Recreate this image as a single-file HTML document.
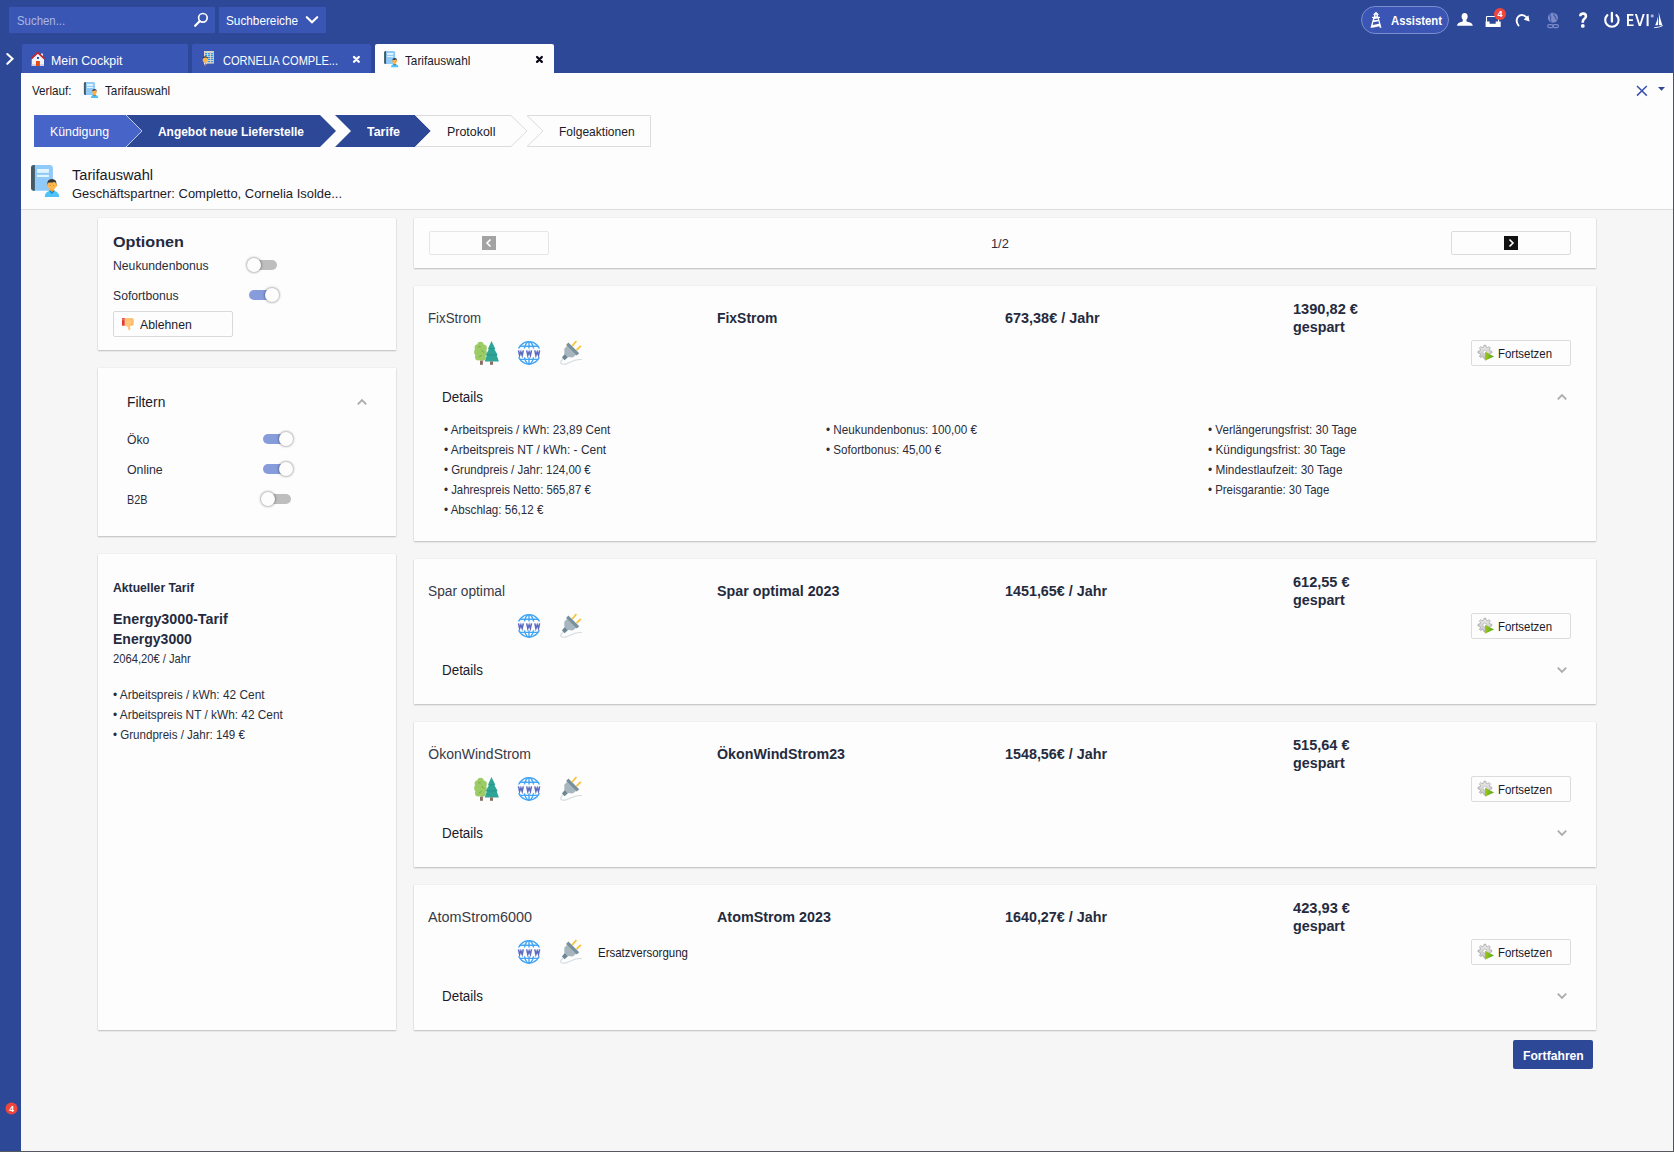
<!DOCTYPE html>
<html><head><meta charset="utf-8"><style>
html,body{margin:0;padding:0;width:1674px;height:1152px;overflow:hidden;}
body{position:relative;font-family:"Liberation Sans",sans-serif;}
.r{position:absolute;}
.t{position:absolute;line-height:1;white-space:nowrap;transform-origin:0 0;}
</style></head><body>
<div class="r" style="left:0px;top:0px;width:1674px;height:1152px;background:#2e4898"></div>
<div class="r" style="left:21px;top:73px;width:1652px;height:137px;background:#fdfdfd"></div>
<div class="r" style="left:21px;top:209px;width:1652px;height:1px;background:#dedede"></div>
<div class="r" style="left:21px;top:210px;width:1652px;height:941px;background:#f6f6f6"></div>
<div class="r" style="left:1673px;top:0px;width:1px;height:1152px;background:#4f5259"></div>
<div class="r" style="left:0px;top:1151px;width:1674px;height:1px;background:#55585e"></div>
<div class="r" style="left:9px;top:7px;width:206px;height:26px;background:#3956b4"></div>
<div class="t" style="left:16.70px;top:15px;font-size:12.6px;font-weight:400;color:#a9b6e3;transform:scaleX(0.9057);">Suchen...</div>
<svg class="r" style="left:188px;top:6px" width="28" height="28" viewBox="0 0 28 28"><circle cx="14.9" cy="11.8" r="4.3" fill="none" stroke="#fff" stroke-width="1.7"/><line x1="11.6" y1="15.3" x2="7.2" y2="19.8" stroke="#fff" stroke-width="2.3" stroke-linecap="round"/></svg>
<div class="r" style="left:219px;top:7px;width:107px;height:26px;background:#3956b4"></div>
<div class="t" style="left:226.00px;top:15px;font-size:12.6px;font-weight:400;color:#fff;transform:scaleX(0.9349);">Suchbereiche</div>
<svg class="r" style="left:296px;top:8px" width="30" height="24" viewBox="0 0 30 24"><polyline points="10.8,9.2 16,14.3 21.2,9.2" fill="none" stroke="#fff" stroke-width="2.2" stroke-linecap="round"/></svg>
<svg class="r" style="left:0px;top:48px" width="20" height="24" viewBox="0 0 20 24"><polyline points="7.3,6 12.5,10.8 7.3,15.8" fill="none" stroke="#fff" stroke-width="2.1" stroke-linecap="round"/></svg>
<div class="r" style="left:22px;top:44px;width:166px;height:29px;background:#3956b4;border-radius:2px 2px 0 0"></div>
<svg class="r" style="left:26px;top:48px" width="24" height="22" viewBox="0 0 24 22"><rect x="15" y="5.5" width="2" height="3" fill="#dfe6f5"/><polygon points="5.7,11 11.8,5.2 18,11 18,18 5.7,18" fill="#f1f1f8"/><rect x="5.7" y="16.2" width="12.3" height="1.7" fill="#c9cde8"/><polyline points="5.2,10.8 11.8,4.6 18.6,10.8" fill="none" stroke="#c62828" stroke-width="1.6"/><rect x="10" y="13" width="3.9" height="5" fill="#e64a19"/><rect x="11" y="9" width="1.9" height="1.9" fill="#0d47a1"/></svg>
<div class="t" style="left:51.20px;top:55px;font-size:12.6px;font-weight:400;color:#fff;transform:scaleX(0.9808);">Mein Cockpit</div>
<div class="r" style="left:192px;top:44px;width:179px;height:29px;background:#3956b4;border-radius:2px 2px 0 0"></div>
<svg class="r" style="left:198px;top:48px" width="24" height="24" viewBox="0 0 24 24"><rect x="6" y="3" width="9.9" height="12.6" fill="#d9d4c9"/><rect x="7" y="4.9" width="2.1" height="1.3" rx="0.6" fill="#2196f3"/><rect x="7" y="6.8" width="2.1" height="1.3" rx="0.6" fill="#2196f3"/><rect x="7" y="8.8" width="2.1" height="1.3" rx="0.6" fill="#2196f3"/><rect x="7" y="10.7" width="2.1" height="1.3" rx="0.6" fill="#2196f3"/><rect x="7" y="12.9" width="2.1" height="1.3" rx="0.6" fill="#2196f3"/><rect x="10" y="4.9" width="2.1" height="1.3" rx="0.6" fill="#2196f3"/><rect x="10" y="6.8" width="2.1" height="1.3" rx="0.6" fill="#2196f3"/><rect x="10" y="8.8" width="2.1" height="1.3" rx="0.6" fill="#2196f3"/><rect x="10" y="10.7" width="2.1" height="1.3" rx="0.6" fill="#2196f3"/><rect x="10" y="12.9" width="2.1" height="1.3" rx="0.6" fill="#2196f3"/><rect x="12.9" y="4.9" width="2.1" height="1.3" rx="0.6" fill="#2196f3"/><rect x="12.9" y="6.8" width="2.1" height="1.3" rx="0.6" fill="#2196f3"/><rect x="12.9" y="8.8" width="2.1" height="1.3" rx="0.6" fill="#2196f3"/><rect x="12.9" y="10.7" width="2.1" height="1.3" rx="0.6" fill="#2196f3"/><rect x="12.9" y="12.9" width="2.1" height="1.3" rx="0.6" fill="#2196f3"/><path d="M4.6 9.2 Q7.3 7.2 10 9.6 L10 10.6 L4.6 10.6Z" fill="#3b3b3b"/><circle cx="7.3" cy="12.1" r="2.6" fill="#fbb54b"/><path d="M5.6 15 L9 15 L7.3 18.5Z" fill="#e8eaf6"/><path d="M6.9 15.2 L7.7 15.2 L8 17.8 L7.3 18.6 L6.6 17.8Z" fill="#e53935"/></svg>
<div class="t" style="left:222.50px;top:55px;font-size:12.6px;font-weight:400;color:#fff;transform:scaleX(0.8787);">CORNELIA COMPLE...</div>
<svg class="r" style="left:349px;top:52px" width="14" height="14" viewBox="0 0 14 14"><path d="M5 5L9.8 9.8M9.8 5L5 9.8" stroke="#fff" stroke-width="2.3" stroke-linecap="round"/></svg>
<div class="r" style="left:375px;top:44px;width:179px;height:29px;background:#fdfdfd;border-radius:2px 2px 0 0"></div>
<svg class="r" style="left:378px;top:48px" width="24" height="24" viewBox="0 0 24 24"><g transform="translate(6.1,3) scale(0.506) translate(-5,-5)"><rect x="5" y="5" width="21.9" height="25.7" rx="3" fill="#90caf9"/><path d="M8.9 5 L8 5 Q5 5 5 8 L5 27.7 Q5 30.7 8 30.7 L8.9 30.7Z" fill="#455a64"/><rect x="11.1" y="9" width="11.8" height="3.8" fill="#e1f5fe"/><rect x="11.1" y="14.9" width="11.8" height="2.1" fill="#e1f5fe"/><path d="M18.75 37 Q18.9 31.3 24 31 L27.8 31 Q33 31.3 33.2 37Z" fill="#4fc3f7"/><path d="M22.6 30.6 L29.2 30.6 L25.9 34Z" fill="#0288d1"/><path d="M23.4 28.6 L28.4 28.6 L25.9 32.8Z" fill="#ff9800"/><ellipse cx="21.6" cy="25.2" rx="0.9" ry="1.3" fill="#f9a63a"/><ellipse cx="30.2" cy="25.2" rx="0.9" ry="1.3" fill="#f9a63a"/><ellipse cx="25.9" cy="24.9" rx="4.2" ry="5.1" fill="#ffb74d"/><path d="M21.4 24.8 Q20.8 19.1 25.9 19 Q31 19.1 30.4 24.8 Q29.8 22.2 28.2 21.7 Q26 23 22.6 22.4 Q21.8 23 21.4 24.8Z" fill="#34383c"/><circle cx="24.4" cy="25.6" r="0.45" fill="#8a5a20"/><circle cx="27.4" cy="25.6" r="0.45" fill="#8a5a20"/></g></svg>
<div class="t" style="left:405.30px;top:55px;font-size:12.6px;font-weight:400;color:#1a1a2a;transform:scaleX(0.9329);">Tarifauswahl</div>
<svg class="r" style="left:530px;top:50px" width="20" height="20" viewBox="0 0 20 20"><path d="M7.05 7.05L11.85 11.85M11.85 7.05L7.05 11.85" stroke="#0a0a1a" stroke-width="2.3" stroke-linecap="round"/></svg>
<div class="r" style="left:1361px;top:6px;width:88px;height:28px;background:#3a55b3;border:1px solid #7b8dcc;border-radius:14px;box-sizing:border-box"></div>
<svg class="r" style="left:1366px;top:8px" width="22" height="24" viewBox="0 0 22 24"><g fill="#fff"><polygon points="10,3.8 13.2,6.7 6.8,6.7"/><rect x="8" y="6.5" width="4" height="3"/><rect x="6" y="8.8" width="8" height="1.3" rx="0.5"/><polygon points="7.2,10 12.8,10 15.5,19.8 4.5,19.8"/></g><g fill="#3a55b3"><rect x="9.4" y="7.2" width="1.2" height="1.1"/><polygon points="8.3,10.9 11.8,10.5 12.1,11.7 8.1,12.3"/><polygon points="7.2,14.2 12.5,13.3 13,15.8 6.8,17"/><polygon points="6.2,19.9 13.3,18.2 13.8,19.9"/></g></svg>
<div class="t" style="left:1391.00px;top:15px;font-size:12.6px;font-weight:700;color:#fff;transform:scaleX(0.8977);">Assistent</div>
<svg class="r" style="left:1452px;top:4px" width="24" height="24" viewBox="0 0 24 24"><ellipse cx="12.6" cy="12.6" rx="3" ry="3.6" fill="#fff"/><path d="M11 15.5 L14.2 15.5 L14.6 17.6 Q20.5 18.6 20.8 21.8 L5 21.8 Q5.3 18.6 10.6 17.6Z" fill="#fff"/></svg>
<svg class="r" style="left:1484px;top:14px" width="18" height="15" viewBox="0 0 18 15"><path d="M2.5 2.5 L14.5 2.5 L14.5 8 M2.5 2.5 L2.5 8" fill="none" stroke="#fff" stroke-width="1.1"/><path d="M1.6 7.6 L5.6 7.6 L5.6 9.8 L11.7 9.8 L11.7 7.6 L16.7 7.6 L16.7 13.1 L1.6 13.1Z" fill="#fff"/></svg>
<svg class="r" style="left:1493px;top:7px" width="14" height="14" viewBox="0 0 14 14"><circle cx="7" cy="7" r="6" fill="#f0453a"/><text x="7" y="10.2" font-family="Liberation Sans" font-weight="700" font-size="9" fill="#fff" text-anchor="middle">4</text></svg>
<svg class="r" style="left:1512px;top:10px" width="20" height="18" viewBox="0 0 20 18"><path d="M6.5 15.5 Q3.4 11.5 5.5 7.6 Q7.8 4 11.6 5.3 Q13.6 6 15 8" fill="none" stroke="#fff" stroke-width="1.9" stroke-linecap="round"/><polygon points="17.6,11.4 16.4,5.2 11.6,9.6" fill="#fff"/></svg>
<svg class="r" style="left:1544px;top:10px" width="18" height="20" viewBox="0 0 18 20"><circle cx="8.9" cy="7.8" r="5" fill="#7b8bc9"/><path d="M6.5 3.6 Q5 6 6.8 7.2 Q5.6 9.6 7.4 12 M10.2 3.3 Q9.2 5.6 11.4 6.4 Q10.6 8.6 12.8 9.4" stroke="#4058a8" stroke-width="1.1" fill="none"/><rect x="3.7" y="14.6" width="5.4" height="3" rx="1.5" fill="none" stroke="#7b8bc9" stroke-width="1.2"/><rect x="9" y="14.6" width="5.4" height="3" rx="1.5" fill="none" stroke="#7b8bc9" stroke-width="1.2"/></svg>
<svg class="r" style="left:1577px;top:11px" width="12" height="18" viewBox="0 0 12 18"><path d="M3.3 5.3 Q3.3 2.6 6.2 2.6 Q8.9 2.6 8.9 5.2 Q8.9 6.9 7.3 7.9 Q5.8 8.9 5.8 10.6 L5.8 11.8" fill="none" stroke="#fff" stroke-width="2.6"/><circle cx="5.8" cy="14.9" r="1.9" fill="#fff"/></svg>
<svg class="r" style="left:1600px;top:6px" width="24" height="28" viewBox="0 0 24 28"><path d="M7.4 9.1 A6.7 6.7 0 1 0 16.4 9.1" fill="none" stroke="#fff" stroke-width="2.1" stroke-linecap="round"/><line x1="11.9" y1="7" x2="11.9" y2="15.6" stroke="#fff" stroke-width="2.3" stroke-linecap="round"/></svg>
<svg class="r" style="left:1624px;top:6px" width="50" height="28" viewBox="0 0 50 28"><g fill="#fff"><path d="M3 8 L9.4 8 L9.4 9.8 L4.9 9.8 L4.9 13.2 L8.9 13.2 L8.9 14.9 L4.9 14.9 L4.9 18.4 L9.6 18.4 L9.6 20.1 L3 20.1Z"/><path d="M10.9 8 L12.9 8 L15.8 17.6 L18.7 8 L20.7 8 L16.8 20.1 L14.8 20.1Z"/><rect x="22.6" y="8" width="2" height="12.1"/></g><circle cx="28.2" cy="9.9" r="1.6" fill="#a6b2e4"/><path d="M34.7 6.2 Q36.2 12.5 38.4 19.4 L34.8 19.1 Q35.3 12.8 34.7 6.2Z" fill="#fff"/><path d="M34 10.5 Q33 15.5 31.2 19.2 L33.9 19.2 Q34.4 15 34 10.5Z" fill="#fff"/><path d="M30.2 21.7 Q34.5 21.6 38.8 19.6" fill="none" stroke="#fff" stroke-width="0.9"/></svg>
<div class="t" style="left:32.00px;top:85px;font-size:12.6px;font-weight:400;color:#1a1a2a;transform:scaleX(0.9247);">Verlauf:</div>
<svg class="r" style="left:80px;top:78px" width="24" height="24" viewBox="0 0 24 24"><g transform="translate(3.9,3.9) scale(0.506) translate(-5,-5)"><rect x="5" y="5" width="21.9" height="25.7" rx="3" fill="#90caf9"/><path d="M8.9 5 L8 5 Q5 5 5 8 L5 27.7 Q5 30.7 8 30.7 L8.9 30.7Z" fill="#455a64"/><rect x="11.1" y="9" width="11.8" height="3.8" fill="#e1f5fe"/><rect x="11.1" y="14.9" width="11.8" height="2.1" fill="#e1f5fe"/><path d="M18.75 37 Q18.9 31.3 24 31 L27.8 31 Q33 31.3 33.2 37Z" fill="#4fc3f7"/><path d="M22.6 30.6 L29.2 30.6 L25.9 34Z" fill="#0288d1"/><path d="M23.4 28.6 L28.4 28.6 L25.9 32.8Z" fill="#ff9800"/><ellipse cx="21.6" cy="25.2" rx="0.9" ry="1.3" fill="#f9a63a"/><ellipse cx="30.2" cy="25.2" rx="0.9" ry="1.3" fill="#f9a63a"/><ellipse cx="25.9" cy="24.9" rx="4.2" ry="5.1" fill="#ffb74d"/><path d="M21.4 24.8 Q20.8 19.1 25.9 19 Q31 19.1 30.4 24.8 Q29.8 22.2 28.2 21.7 Q26 23 22.6 22.4 Q21.8 23 21.4 24.8Z" fill="#34383c"/><circle cx="24.4" cy="25.6" r="0.45" fill="#8a5a20"/><circle cx="27.4" cy="25.6" r="0.45" fill="#8a5a20"/></g></svg>
<div class="t" style="left:104.50px;top:85px;font-size:12.6px;font-weight:400;color:#1a1a2a;transform:scaleX(0.9314);">Tarifauswahl</div>
<svg class="r" style="left:1632px;top:82px" width="20" height="18" viewBox="0 0 20 18"><path d="M5 4 L14.8 13.6 M14.8 4 L5 13.6" stroke="#3a52b0" stroke-width="1.5"/></svg>
<svg class="r" style="left:1655px;top:84px" width="14" height="10" viewBox="0 0 14 10"><polygon points="3,2.9 10,2.9 6.5,6.8" fill="#2e4898"/></svg>
<svg class="r" style="left:0px;top:0px" width="700" height="160" viewBox="0 0 700 160"><polygon points="34,115 126,115 142,131 126,147 34,147" fill="#4764c8"/><polygon points="126,115 320,115 336,131 320,147 126,147 142,131" fill="#2e4898"/><polyline points="126,115 142,131 126,147" fill="none" stroke="#c9d0ea" stroke-width="0.9"/><polygon points="335,115 415,115 431,131 415,147 335,147 351,131" fill="#2e4898"/><polygon points="415.5,115.5 511,115.5 527,131 511,146.5 415.5,146.5 431,131" fill="#fdfdfd" stroke="#dcdcdc" stroke-width="1"/><polygon points="527,115.5 650.5,115.5 650.5,146.5 527,146.5 543,131" fill="#fdfdfd" stroke="#dcdcdc" stroke-width="1"/></svg>
<div class="t" style="left:50.00px;top:126px;font-size:12.6px;font-weight:400;color:#fff;transform:scaleX(0.9795);">Kündigung</div>
<div class="t" style="left:158.20px;top:126px;font-size:12.6px;font-weight:700;color:#fff;transform:scaleX(0.9482);">Angebot neue Lieferstelle</div>
<div class="t" style="left:367.20px;top:126px;font-size:12.6px;font-weight:700;color:#fff;transform:scaleX(0.9888);">Tarife</div>
<div class="t" style="left:447.40px;top:126px;font-size:12.6px;font-weight:400;color:#1a1a2a;transform:scaleX(0.9878);">Protokoll</div>
<div class="t" style="left:559.40px;top:126px;font-size:12.6px;font-weight:400;color:#1a1a2a;transform:scaleX(0.9555);">Folgeaktionen</div>
<svg class="r" style="left:26px;top:160px" width="38" height="40" viewBox="0 0 38 40"><rect x="5" y="5" width="21.9" height="25.7" rx="3" fill="#90caf9"/><path d="M8.9 5 L8 5 Q5 5 5 8 L5 27.7 Q5 30.7 8 30.7 L8.9 30.7Z" fill="#455a64"/><rect x="11.1" y="9" width="11.8" height="3.8" fill="#e1f5fe"/><rect x="11.1" y="14.9" width="11.8" height="2.1" fill="#e1f5fe"/><path d="M18.75 37 Q18.9 31.3 24 31 L27.8 31 Q33 31.3 33.2 37Z" fill="#4fc3f7"/><path d="M22.6 30.6 L29.2 30.6 L25.9 34Z" fill="#0288d1"/><path d="M23.4 28.6 L28.4 28.6 L25.9 32.8Z" fill="#ff9800"/><ellipse cx="21.6" cy="25.2" rx="0.9" ry="1.3" fill="#f9a63a"/><ellipse cx="30.2" cy="25.2" rx="0.9" ry="1.3" fill="#f9a63a"/><ellipse cx="25.9" cy="24.9" rx="4.2" ry="5.1" fill="#ffb74d"/><path d="M21.4 24.8 Q20.8 19.1 25.9 19 Q31 19.1 30.4 24.8 Q29.8 22.2 28.2 21.7 Q26 23 22.6 22.4 Q21.8 23 21.4 24.8Z" fill="#34383c"/><circle cx="24.4" cy="25.6" r="0.45" fill="#8a5a20"/><circle cx="27.4" cy="25.6" r="0.45" fill="#8a5a20"/></svg>
<div class="t" style="left:71.80px;top:167px;font-size:15.4px;font-weight:400;color:#1a1a2a;transform:scaleX(0.9468);">Tarifauswahl</div>
<div class="t" style="left:71.80px;top:188px;font-size:12.6px;font-weight:400;color:#1a1a2a;transform:scaleX(1.0286);">Geschäftspartner: Completto, Cornelia Isolde...</div>
<div class="r" style="left:98px;top:218px;width:298px;height:132px;background:#fdfdfd;box-shadow:0 1px 1.5px rgba(0,0,0,0.22),0 0 1px rgba(0,0,0,0.12)"></div>
<div class="r" style="left:98px;top:368px;width:298px;height:168px;background:#fdfdfd;box-shadow:0 1px 1.5px rgba(0,0,0,0.22),0 0 1px rgba(0,0,0,0.12)"></div>
<div class="r" style="left:98px;top:554px;width:298px;height:476px;background:#fdfdfd;box-shadow:0 1px 1.5px rgba(0,0,0,0.22),0 0 1px rgba(0,0,0,0.12)"></div>
<div class="r" style="left:414px;top:218px;width:1182px;height:50px;background:#fdfdfd;box-shadow:0 1px 1.5px rgba(0,0,0,0.22),0 0 1px rgba(0,0,0,0.12)"></div>
<div class="r" style="left:414px;top:286px;width:1182px;height:255px;background:#fdfdfd;box-shadow:0 1px 1.5px rgba(0,0,0,0.22),0 0 1px rgba(0,0,0,0.12)"></div>
<div class="r" style="left:414px;top:559px;width:1182px;height:145px;background:#fdfdfd;box-shadow:0 1px 1.5px rgba(0,0,0,0.22),0 0 1px rgba(0,0,0,0.12)"></div>
<div class="r" style="left:414px;top:722px;width:1182px;height:145px;background:#fdfdfd;box-shadow:0 1px 1.5px rgba(0,0,0,0.22),0 0 1px rgba(0,0,0,0.12)"></div>
<div class="r" style="left:414px;top:885px;width:1182px;height:145px;background:#fdfdfd;box-shadow:0 1px 1.5px rgba(0,0,0,0.22),0 0 1px rgba(0,0,0,0.12)"></div>
<div class="t" style="left:113.30px;top:234px;font-size:15.4px;font-weight:700;color:#252b3e;transform:scaleX(1.0511);">Optionen</div>
<div class="t" style="left:113.30px;top:260px;font-size:12.6px;font-weight:400;color:#2a2d3c;transform:scaleX(0.9693);">Neukundenbonus</div>
<div class="r" style="left:249px;top:260px;width:28px;height:10px;background:#bebebe;border-radius:5px"></div>
<div class="r" style="left:247px;top:258px;width:14px;height:14px;border-radius:50%;background:#fdfdfd;box-shadow:0 0 2px 1px rgba(0,0,0,0.28)"></div>
<div class="t" style="left:113.30px;top:290px;font-size:12.6px;font-weight:400;color:#2a2d3c;transform:scaleX(0.9673);">Sofortbonus</div>
<div class="r" style="left:249px;top:290px;width:28px;height:10px;background:#879cdb;border-radius:5px"></div>
<div class="r" style="left:265px;top:288px;width:14px;height:14px;border-radius:50%;background:#fdfdfd;box-shadow:0 0 2px 1px rgba(0,0,0,0.28)"></div>
<div class="r" style="left:113px;top:311px;width:120px;height:26px;background:#fdfdfd;border:1px solid #d9d9d9;border-radius:2px;box-sizing:border-box"></div>
<svg class="r" style="left:110px;top:308px" width="30" height="28" viewBox="0 0 30 28"><rect x="12" y="10" width="2.8" height="7.7" fill="#e53935"/><rect x="12.6" y="10.6" width="0.8" height="1.6" fill="#ffcdd2"/><path d="M14.8 10 L22 10 Q23.7 10 23.7 11.6 L23.7 16.3 Q23.7 17.6 22.3 17.8 L20 18 L20.4 20.8 Q20.5 22.2 19.3 22.2 Q18.6 22.2 18.3 21.2 L17.4 18.4 L14.8 17.7Z" fill="#ffc578"/><path d="M21 12 L23.7 12 M21 14 L23.7 14 M21 16 L23.7 16" stroke="#f0a850" stroke-width="0.5"/></svg>
<div class="t" style="left:140.00px;top:319px;font-size:12.6px;font-weight:400;color:#1a1a2a;transform:scaleX(0.9731);">Ablehnen</div>
<div class="t" style="left:127.30px;top:395px;font-size:14.0px;font-weight:400;color:#1a1a2a;transform:scaleX(0.9844);">Filtern</div>
<svg class="r" style="left:356px;top:398px" width="12" height="8" viewBox="0 0 12 8"><polyline points="1.8,6.3 6,2.1 10.2,6.3" fill="none" stroke="#acacac" stroke-width="1.8"/></svg>
<div class="t" style="left:127.30px;top:434px;font-size:12.6px;font-weight:400;color:#2a2d3c;transform:scaleX(0.9693);">Öko</div>
<div class="r" style="left:263px;top:433.8px;width:28px;height:10.0px;background:#879cdb;border-radius:5px"></div>
<div class="r" style="left:279px;top:431.8px;width:14px;height:14px;border-radius:50%;background:#fdfdfd;box-shadow:0 0 2px 1px rgba(0,0,0,0.28)"></div>
<div class="t" style="left:127.30px;top:464px;font-size:12.6px;font-weight:400;color:#2a2d3c;transform:scaleX(0.9806);">Online</div>
<div class="r" style="left:263px;top:463.8px;width:28px;height:10.0px;background:#879cdb;border-radius:5px"></div>
<div class="r" style="left:279px;top:461.8px;width:14px;height:14px;border-radius:50%;background:#fdfdfd;box-shadow:0 0 2px 1px rgba(0,0,0,0.28)"></div>
<div class="t" style="left:127.30px;top:494px;font-size:12.6px;font-weight:400;color:#2a2d3c;transform:scaleX(0.8609);">B2B</div>
<div class="r" style="left:263px;top:493.8px;width:28px;height:10.0px;background:#bebebe;border-radius:5px"></div>
<div class="r" style="left:261px;top:491.8px;width:14px;height:14px;border-radius:50%;background:#fdfdfd;box-shadow:0 0 2px 1px rgba(0,0,0,0.28)"></div>
<div class="t" style="left:113.00px;top:582px;font-size:12.6px;font-weight:700;color:#252b3e;transform:scaleX(0.9672);">Aktueller Tarif</div>
<div class="t" style="left:113.00px;top:612px;font-size:14.0px;font-weight:700;color:#252b3e;transform:scaleX(1.0188);">Energy3000-Tarif</div>
<div class="t" style="left:113.00px;top:632px;font-size:14.0px;font-weight:700;color:#252b3e;transform:scaleX(1.0024);">Energy3000</div>
<div class="t" style="left:113.00px;top:653px;font-size:12.6px;font-weight:400;color:#2a2d3c;transform:scaleX(0.8888);">2064,20€ / Jahr</div>
<div class="t" style="left:113.00px;top:689px;font-size:12.6px;font-weight:400;color:#2a2d3c;transform:scaleX(0.9445);">• Arbeitspreis / kWh: 42 Cent</div>
<div class="t" style="left:113.00px;top:709px;font-size:12.6px;font-weight:400;color:#2a2d3c;transform:scaleX(0.9404);">• Arbeitspreis NT / kWh: 42 Cent</div>
<div class="t" style="left:113.00px;top:729px;font-size:12.6px;font-weight:400;color:#2a2d3c;transform:scaleX(0.9178);">• Grundpreis / Jahr: 149 €</div>
<div class="r" style="left:429px;top:231px;width:120px;height:24px;border:1px solid #e6e6e6;border-radius:2px;box-sizing:border-box;background:#fdfdfd"></div>
<svg class="r" style="left:482px;top:236px" width="14" height="14" viewBox="0 0 14 14"><rect width="14" height="14" fill="#a3a3a3"/><polyline points="8.5,3.5 5,7 8.5,10.5" fill="none" stroke="#fff" stroke-width="1.6"/></svg>
<div class="t" style="left:991.00px;top:238px;font-size:12.6px;font-weight:400;color:#2a2d3c;transform:scaleX(1.0162);">1/2</div>
<div class="r" style="left:1451px;top:231px;width:120px;height:24px;border:1px solid #dcdcdc;border-radius:2px;box-sizing:border-box;background:#fdfdfd"></div>
<svg class="r" style="left:1504px;top:236px" width="14" height="14" viewBox="0 0 14 14"><rect width="14" height="14" fill="#111"/><polyline points="5.5,3.5 9,7 5.5,10.5" fill="none" stroke="#fff" stroke-width="1.6"/></svg>
<div class="t" style="left:428.30px;top:311px;font-size:14.0px;font-weight:400;color:#383a46;transform:scaleX(0.9482);">FixStrom</div>
<div class="t" style="left:717.00px;top:311px;font-size:14.0px;font-weight:700;color:#252b3e;transform:scaleX(0.9936);">FixStrom</div>
<div class="t" style="left:1005.30px;top:311px;font-size:14.0px;font-weight:700;color:#252b3e;transform:scaleX(1.0309);">673,38€ / Jahr</div>
<div class="t" style="left:1293.40px;top:302px;font-size:14.0px;font-weight:700;color:#252b3e;transform:scaleX(1.0434);">1390,82 €</div>
<div class="t" style="left:1293.40px;top:320px;font-size:14.0px;font-weight:700;color:#252b3e;transform:scaleX(1.0222);">gespart</div>
<div class="r" style="left:1471px;top:340px;width:100px;height:26px;background:#fdfdfd;border:1px solid #dcdcdc;border-radius:2px;box-sizing:border-box"></div>
<svg class="r" style="left:1474px;top:340px" width="24" height="24" viewBox="0 0 24 24"><defs><linearGradient id="gg0" x1="0" y1="0" x2="0" y2="1"><stop offset="0" stop-color="#ececec"/><stop offset="1" stop-color="#c4c4c4"/></linearGradient><linearGradient id="pg0" x1="0" y1="0" x2="1" y2="0"><stop offset="0" stop-color="#a3c616"/><stop offset="1" stop-color="#4aaa1e"/></linearGradient></defs><path d="M15.97 10.97 L17.74 11.21 L17.74 12.99 L15.97 13.23 L15.29 14.89 L16.37 16.31 L15.11 17.57 L13.69 16.49 L12.03 17.17 L11.79 18.94 L10.01 18.94 L9.77 17.17 L8.11 16.49 L6.69 17.57 L5.43 16.31 L6.51 14.89 L5.83 13.23 L4.06 12.99 L4.06 11.21 L5.83 10.97 L6.51 9.31 L5.43 7.89 L6.69 6.63 L8.11 7.71 L9.77 7.03 L10.01 5.26 L11.79 5.26 L12.03 7.03 L13.69 7.71 L15.11 6.63 L16.37 7.89 L15.29 9.31Z" fill="url(#gg0)" stroke="#9a9a9a" stroke-width="0.7"/><circle cx="10.9" cy="12.1" r="2" fill="#fdfdfd" stroke="#a0a0a0" stroke-width="0.5"/><polygon points="11,11.7 20,16.5 11,20.8" fill="url(#pg0)"/></svg>
<div class="t" style="left:1498.00px;top:348px;font-size:12.6px;font-weight:400;color:#1a1a2a;transform:scaleX(0.9076);">Fortsetzen</div>
<svg class="r" style="left:470px;top:338px" width="32" height="30" viewBox="0 0 32 30"><circle cx="10.5" cy="7" r="3.2" fill="#9ccc65"/><circle cx="8" cy="9.6" r="3.4" fill="#9ccc65"/><circle cx="13.4" cy="10" r="3.5" fill="#9ccc65"/><circle cx="7.6" cy="14" r="3.5" fill="#9ccc65"/><circle cx="13.5" cy="15" r="3.4" fill="#9ccc65"/><circle cx="8.5" cy="19" r="3.5" fill="#9ccc65"/><circle cx="12.5" cy="19.4" r="3.3" fill="#9ccc65"/><circle cx="10.5" cy="13" r="5" fill="#9ccc65"/><path d="M8.3 9.2 Q9.5 8.2 10.6 8.7 M11.6 12.6 Q13.2 13 13.9 14.6 M9.2 19.2 Q10 17.6 11.6 17.6" stroke="#6f9e3e" stroke-width="0.9" fill="none"/><rect x="10" y="22.6" width="2.9" height="4.2" fill="#8d6e63"/><polygon points="21.5,2.9 25.3,10.7 24.2,10.7 27.6,16.9 26.6,16.9 28.9,23.4 14.8,23.4 16.9,16.9 15.9,16.9 19.1,10.7 18,10.7" fill="#2ea597"/><path d="M18.4 10.8 L24.9 10.8 M16.3 17 L27.2 17" stroke="#23938a" stroke-width="0.8"/><rect x="20" y="23.4" width="3" height="3.4" fill="#8d6e63"/></svg>
<svg class="r" style="left:514px;top:338px" width="32" height="30" viewBox="0 0 32 30"><defs><clipPath id="gc0"><rect x="0" y="0" width="32" height="10.5"/><rect x="0" y="19.3" width="32" height="12"/></clipPath></defs><g clip-path="url(#gc0)" fill="none" stroke="#42a5f5" stroke-width="1.4"><circle cx="15" cy="14.85" r="11.2"/><ellipse cx="15" cy="14.85" rx="5" ry="11.2"/><line x1="15" y1="3" x2="15" y2="27"/><line x1="5.9" y1="8.3" x2="24.1" y2="8.3"/><line x1="5.9" y1="21.4" x2="24.1" y2="21.4"/></g><g fill="none" stroke="#5c6bc0" stroke-width="1.55" stroke-linejoin="miter"><polyline points="4.5,12.4 5.6,17.4 6.9,13.8 8.2,17.4 9.3,12.4"/><polyline points="12.7,12.4 13.799999999999999,17.4 15.1,13.8 16.4,17.4 17.5,12.4"/><polyline points="20.8,12.4 21.9,17.4 23.2,13.8 24.5,17.4 25.6,12.4"/></g></svg>
<svg class="r" style="left:556px;top:336px" width="32" height="32" viewBox="0 0 32 32"><path d="M16.2 10 L20.4 5 M20.6 14.2 L24.8 9.8" stroke="#fbc02d" stroke-width="1.7"/><polygon points="11.2,9.7 8.3,12.8 8.3,17.8 11.7,21.1 16.7,21.4 20.5,18.4" fill="#a7b6be"/><polygon points="10.1,8.9 12.4,6.6 23.2,17.2 20.8,19.6" fill="#78909c"/><polygon points="5.9,21.4 8.8,18 11.9,21.3 8.5,24.2" fill="#6e8593"/><path d="M6.8 23.2 Q4 25.6 5 27.4 Q6.5 29 11 27.6 Q15.5 25.8 19 24.3 Q22 23.4 25.8 23.6" stroke="#d3dbdf" stroke-width="1.1" fill="none"/></svg>
<div class="t" style="left:442.00px;top:390px;font-size:14.0px;font-weight:400;color:#1a1a2a;transform:scaleX(0.9580);">Details</div>
<svg class="r" style="left:1556px;top:393px" width="12" height="8" viewBox="0 0 12 8"><polyline points="1.8,6.3 6,2.1 10.2,6.3" fill="none" stroke="#acacac" stroke-width="1.8"/></svg>
<div class="t" style="left:443.50px;top:424px;font-size:12.6px;font-weight:400;color:#2a2d3c;transform:scaleX(0.9342);">• Arbeitspreis / kWh: 23,89 Cent</div>
<div class="t" style="left:443.50px;top:444px;font-size:12.6px;font-weight:400;color:#2a2d3c;transform:scaleX(0.9499);">• Arbeitspreis NT / kWh: - Cent</div>
<div class="t" style="left:443.50px;top:464px;font-size:12.6px;font-weight:400;color:#2a2d3c;transform:scaleX(0.9099);">• Grundpreis / Jahr: 124,00 €</div>
<div class="t" style="left:443.50px;top:484px;font-size:12.6px;font-weight:400;color:#2a2d3c;transform:scaleX(0.9021);">• Jahrespreis Netto: 565,87 €</div>
<div class="t" style="left:443.50px;top:504px;font-size:12.6px;font-weight:400;color:#2a2d3c;transform:scaleX(0.9200);">• Abschlag: 56,12 €</div>
<div class="t" style="left:825.50px;top:424px;font-size:12.6px;font-weight:400;color:#2a2d3c;transform:scaleX(0.9282);">• Neukundenbonus: 100,00 €</div>
<div class="t" style="left:825.50px;top:444px;font-size:12.6px;font-weight:400;color:#2a2d3c;transform:scaleX(0.9228);">• Sofortbonus: 45,00 €</div>
<div class="t" style="left:1207.60px;top:424px;font-size:12.6px;font-weight:400;color:#2a2d3c;transform:scaleX(0.9236);">• Verlängerungsfrist: 30 Tage</div>
<div class="t" style="left:1207.60px;top:444px;font-size:12.6px;font-weight:400;color:#2a2d3c;transform:scaleX(0.9411);">• Kündigungsfrist: 30 Tage</div>
<div class="t" style="left:1207.60px;top:464px;font-size:12.6px;font-weight:400;color:#2a2d3c;transform:scaleX(0.9373);">• Mindestlaufzeit: 30 Tage</div>
<div class="t" style="left:1207.60px;top:484px;font-size:12.6px;font-weight:400;color:#2a2d3c;transform:scaleX(0.9072);">• Preisgarantie: 30 Tage</div>
<div class="t" style="left:428.30px;top:584px;font-size:14.0px;font-weight:400;color:#383a46;transform:scaleX(0.9797);">Spar optimal</div>
<div class="t" style="left:717.00px;top:584px;font-size:14.0px;font-weight:700;color:#252b3e;transform:scaleX(1.0223);">Spar optimal 2023</div>
<div class="t" style="left:1005.30px;top:584px;font-size:14.0px;font-weight:700;color:#252b3e;transform:scaleX(1.0237);">1451,65€ / Jahr</div>
<div class="t" style="left:1293.40px;top:575px;font-size:14.0px;font-weight:700;color:#252b3e;transform:scaleX(1.0367);">612,55 €</div>
<div class="t" style="left:1293.40px;top:593px;font-size:14.0px;font-weight:700;color:#252b3e;transform:scaleX(1.0222);">gespart</div>
<div class="r" style="left:1471px;top:613px;width:100px;height:26px;background:#fdfdfd;border:1px solid #dcdcdc;border-radius:2px;box-sizing:border-box"></div>
<svg class="r" style="left:1474px;top:613px" width="24" height="24" viewBox="0 0 24 24"><defs><linearGradient id="gg1" x1="0" y1="0" x2="0" y2="1"><stop offset="0" stop-color="#ececec"/><stop offset="1" stop-color="#c4c4c4"/></linearGradient><linearGradient id="pg1" x1="0" y1="0" x2="1" y2="0"><stop offset="0" stop-color="#a3c616"/><stop offset="1" stop-color="#4aaa1e"/></linearGradient></defs><path d="M15.97 10.97 L17.74 11.21 L17.74 12.99 L15.97 13.23 L15.29 14.89 L16.37 16.31 L15.11 17.57 L13.69 16.49 L12.03 17.17 L11.79 18.94 L10.01 18.94 L9.77 17.17 L8.11 16.49 L6.69 17.57 L5.43 16.31 L6.51 14.89 L5.83 13.23 L4.06 12.99 L4.06 11.21 L5.83 10.97 L6.51 9.31 L5.43 7.89 L6.69 6.63 L8.11 7.71 L9.77 7.03 L10.01 5.26 L11.79 5.26 L12.03 7.03 L13.69 7.71 L15.11 6.63 L16.37 7.89 L15.29 9.31Z" fill="url(#gg1)" stroke="#9a9a9a" stroke-width="0.7"/><circle cx="10.9" cy="12.1" r="2" fill="#fdfdfd" stroke="#a0a0a0" stroke-width="0.5"/><polygon points="11,11.7 20,16.5 11,20.8" fill="url(#pg1)"/></svg>
<div class="t" style="left:1498.00px;top:621px;font-size:12.6px;font-weight:400;color:#1a1a2a;transform:scaleX(0.9076);">Fortsetzen</div>
<svg class="r" style="left:514px;top:611px" width="32" height="30" viewBox="0 0 32 30"><defs><clipPath id="gc1"><rect x="0" y="0" width="32" height="10.5"/><rect x="0" y="19.3" width="32" height="12"/></clipPath></defs><g clip-path="url(#gc1)" fill="none" stroke="#42a5f5" stroke-width="1.4"><circle cx="15" cy="14.85" r="11.2"/><ellipse cx="15" cy="14.85" rx="5" ry="11.2"/><line x1="15" y1="3" x2="15" y2="27"/><line x1="5.9" y1="8.3" x2="24.1" y2="8.3"/><line x1="5.9" y1="21.4" x2="24.1" y2="21.4"/></g><g fill="none" stroke="#5c6bc0" stroke-width="1.55" stroke-linejoin="miter"><polyline points="4.5,12.4 5.6,17.4 6.9,13.8 8.2,17.4 9.3,12.4"/><polyline points="12.7,12.4 13.799999999999999,17.4 15.1,13.8 16.4,17.4 17.5,12.4"/><polyline points="20.8,12.4 21.9,17.4 23.2,13.8 24.5,17.4 25.6,12.4"/></g></svg>
<svg class="r" style="left:556px;top:609px" width="32" height="32" viewBox="0 0 32 32"><path d="M16.2 10 L20.4 5 M20.6 14.2 L24.8 9.8" stroke="#fbc02d" stroke-width="1.7"/><polygon points="11.2,9.7 8.3,12.8 8.3,17.8 11.7,21.1 16.7,21.4 20.5,18.4" fill="#a7b6be"/><polygon points="10.1,8.9 12.4,6.6 23.2,17.2 20.8,19.6" fill="#78909c"/><polygon points="5.9,21.4 8.8,18 11.9,21.3 8.5,24.2" fill="#6e8593"/><path d="M6.8 23.2 Q4 25.6 5 27.4 Q6.5 29 11 27.6 Q15.5 25.8 19 24.3 Q22 23.4 25.8 23.6" stroke="#d3dbdf" stroke-width="1.1" fill="none"/></svg>
<div class="t" style="left:442.00px;top:663px;font-size:14.0px;font-weight:400;color:#1a1a2a;transform:scaleX(0.9580);">Details</div>
<svg class="r" style="left:1556px;top:666px" width="12" height="8" viewBox="0 0 12 8"><polyline points="1.8,1.7 6,5.9 10.2,1.7" fill="none" stroke="#acacac" stroke-width="1.8"/></svg>
<div class="t" style="left:428.30px;top:747px;font-size:14.0px;font-weight:400;color:#383a46;transform:scaleX(1.0000);">ÖkonWindStrom</div>
<div class="t" style="left:717.00px;top:747px;font-size:14.0px;font-weight:700;color:#252b3e;transform:scaleX(1.0168);">ÖkonWindStrom23</div>
<div class="t" style="left:1005.30px;top:747px;font-size:14.0px;font-weight:700;color:#252b3e;transform:scaleX(1.0237);">1548,56€ / Jahr</div>
<div class="t" style="left:1293.40px;top:738px;font-size:14.0px;font-weight:700;color:#252b3e;transform:scaleX(1.0367);">515,64 €</div>
<div class="t" style="left:1293.40px;top:756px;font-size:14.0px;font-weight:700;color:#252b3e;transform:scaleX(1.0222);">gespart</div>
<div class="r" style="left:1471px;top:776px;width:100px;height:26px;background:#fdfdfd;border:1px solid #dcdcdc;border-radius:2px;box-sizing:border-box"></div>
<svg class="r" style="left:1474px;top:776px" width="24" height="24" viewBox="0 0 24 24"><defs><linearGradient id="gg2" x1="0" y1="0" x2="0" y2="1"><stop offset="0" stop-color="#ececec"/><stop offset="1" stop-color="#c4c4c4"/></linearGradient><linearGradient id="pg2" x1="0" y1="0" x2="1" y2="0"><stop offset="0" stop-color="#a3c616"/><stop offset="1" stop-color="#4aaa1e"/></linearGradient></defs><path d="M15.97 10.97 L17.74 11.21 L17.74 12.99 L15.97 13.23 L15.29 14.89 L16.37 16.31 L15.11 17.57 L13.69 16.49 L12.03 17.17 L11.79 18.94 L10.01 18.94 L9.77 17.17 L8.11 16.49 L6.69 17.57 L5.43 16.31 L6.51 14.89 L5.83 13.23 L4.06 12.99 L4.06 11.21 L5.83 10.97 L6.51 9.31 L5.43 7.89 L6.69 6.63 L8.11 7.71 L9.77 7.03 L10.01 5.26 L11.79 5.26 L12.03 7.03 L13.69 7.71 L15.11 6.63 L16.37 7.89 L15.29 9.31Z" fill="url(#gg2)" stroke="#9a9a9a" stroke-width="0.7"/><circle cx="10.9" cy="12.1" r="2" fill="#fdfdfd" stroke="#a0a0a0" stroke-width="0.5"/><polygon points="11,11.7 20,16.5 11,20.8" fill="url(#pg2)"/></svg>
<div class="t" style="left:1498.00px;top:784px;font-size:12.6px;font-weight:400;color:#1a1a2a;transform:scaleX(0.9076);">Fortsetzen</div>
<svg class="r" style="left:470px;top:774px" width="32" height="30" viewBox="0 0 32 30"><circle cx="10.5" cy="7" r="3.2" fill="#9ccc65"/><circle cx="8" cy="9.6" r="3.4" fill="#9ccc65"/><circle cx="13.4" cy="10" r="3.5" fill="#9ccc65"/><circle cx="7.6" cy="14" r="3.5" fill="#9ccc65"/><circle cx="13.5" cy="15" r="3.4" fill="#9ccc65"/><circle cx="8.5" cy="19" r="3.5" fill="#9ccc65"/><circle cx="12.5" cy="19.4" r="3.3" fill="#9ccc65"/><circle cx="10.5" cy="13" r="5" fill="#9ccc65"/><path d="M8.3 9.2 Q9.5 8.2 10.6 8.7 M11.6 12.6 Q13.2 13 13.9 14.6 M9.2 19.2 Q10 17.6 11.6 17.6" stroke="#6f9e3e" stroke-width="0.9" fill="none"/><rect x="10" y="22.6" width="2.9" height="4.2" fill="#8d6e63"/><polygon points="21.5,2.9 25.3,10.7 24.2,10.7 27.6,16.9 26.6,16.9 28.9,23.4 14.8,23.4 16.9,16.9 15.9,16.9 19.1,10.7 18,10.7" fill="#2ea597"/><path d="M18.4 10.8 L24.9 10.8 M16.3 17 L27.2 17" stroke="#23938a" stroke-width="0.8"/><rect x="20" y="23.4" width="3" height="3.4" fill="#8d6e63"/></svg>
<svg class="r" style="left:514px;top:774px" width="32" height="30" viewBox="0 0 32 30"><defs><clipPath id="gc2"><rect x="0" y="0" width="32" height="10.5"/><rect x="0" y="19.3" width="32" height="12"/></clipPath></defs><g clip-path="url(#gc2)" fill="none" stroke="#42a5f5" stroke-width="1.4"><circle cx="15" cy="14.85" r="11.2"/><ellipse cx="15" cy="14.85" rx="5" ry="11.2"/><line x1="15" y1="3" x2="15" y2="27"/><line x1="5.9" y1="8.3" x2="24.1" y2="8.3"/><line x1="5.9" y1="21.4" x2="24.1" y2="21.4"/></g><g fill="none" stroke="#5c6bc0" stroke-width="1.55" stroke-linejoin="miter"><polyline points="4.5,12.4 5.6,17.4 6.9,13.8 8.2,17.4 9.3,12.4"/><polyline points="12.7,12.4 13.799999999999999,17.4 15.1,13.8 16.4,17.4 17.5,12.4"/><polyline points="20.8,12.4 21.9,17.4 23.2,13.8 24.5,17.4 25.6,12.4"/></g></svg>
<svg class="r" style="left:556px;top:772px" width="32" height="32" viewBox="0 0 32 32"><path d="M16.2 10 L20.4 5 M20.6 14.2 L24.8 9.8" stroke="#fbc02d" stroke-width="1.7"/><polygon points="11.2,9.7 8.3,12.8 8.3,17.8 11.7,21.1 16.7,21.4 20.5,18.4" fill="#a7b6be"/><polygon points="10.1,8.9 12.4,6.6 23.2,17.2 20.8,19.6" fill="#78909c"/><polygon points="5.9,21.4 8.8,18 11.9,21.3 8.5,24.2" fill="#6e8593"/><path d="M6.8 23.2 Q4 25.6 5 27.4 Q6.5 29 11 27.6 Q15.5 25.8 19 24.3 Q22 23.4 25.8 23.6" stroke="#d3dbdf" stroke-width="1.1" fill="none"/></svg>
<div class="t" style="left:442.00px;top:826px;font-size:14.0px;font-weight:400;color:#1a1a2a;transform:scaleX(0.9580);">Details</div>
<svg class="r" style="left:1556px;top:829px" width="12" height="8" viewBox="0 0 12 8"><polyline points="1.8,1.7 6,5.9 10.2,1.7" fill="none" stroke="#acacac" stroke-width="1.8"/></svg>
<div class="t" style="left:428.30px;top:910px;font-size:14.0px;font-weight:400;color:#383a46;transform:scaleX(1.0280);">AtomStrom6000</div>
<div class="t" style="left:717.00px;top:910px;font-size:14.0px;font-weight:700;color:#252b3e;transform:scaleX(1.0246);">AtomStrom 2023</div>
<div class="t" style="left:1005.30px;top:910px;font-size:14.0px;font-weight:700;color:#252b3e;transform:scaleX(1.0237);">1640,27€ / Jahr</div>
<div class="t" style="left:1293.40px;top:901px;font-size:14.0px;font-weight:700;color:#252b3e;transform:scaleX(1.0459);">423,93 €</div>
<div class="t" style="left:1293.40px;top:919px;font-size:14.0px;font-weight:700;color:#252b3e;transform:scaleX(1.0222);">gespart</div>
<div class="r" style="left:1471px;top:939px;width:100px;height:26px;background:#fdfdfd;border:1px solid #dcdcdc;border-radius:2px;box-sizing:border-box"></div>
<svg class="r" style="left:1474px;top:939px" width="24" height="24" viewBox="0 0 24 24"><defs><linearGradient id="gg3" x1="0" y1="0" x2="0" y2="1"><stop offset="0" stop-color="#ececec"/><stop offset="1" stop-color="#c4c4c4"/></linearGradient><linearGradient id="pg3" x1="0" y1="0" x2="1" y2="0"><stop offset="0" stop-color="#a3c616"/><stop offset="1" stop-color="#4aaa1e"/></linearGradient></defs><path d="M15.97 10.97 L17.74 11.21 L17.74 12.99 L15.97 13.23 L15.29 14.89 L16.37 16.31 L15.11 17.57 L13.69 16.49 L12.03 17.17 L11.79 18.94 L10.01 18.94 L9.77 17.17 L8.11 16.49 L6.69 17.57 L5.43 16.31 L6.51 14.89 L5.83 13.23 L4.06 12.99 L4.06 11.21 L5.83 10.97 L6.51 9.31 L5.43 7.89 L6.69 6.63 L8.11 7.71 L9.77 7.03 L10.01 5.26 L11.79 5.26 L12.03 7.03 L13.69 7.71 L15.11 6.63 L16.37 7.89 L15.29 9.31Z" fill="url(#gg3)" stroke="#9a9a9a" stroke-width="0.7"/><circle cx="10.9" cy="12.1" r="2" fill="#fdfdfd" stroke="#a0a0a0" stroke-width="0.5"/><polygon points="11,11.7 20,16.5 11,20.8" fill="url(#pg3)"/></svg>
<div class="t" style="left:1498.00px;top:947px;font-size:12.6px;font-weight:400;color:#1a1a2a;transform:scaleX(0.9076);">Fortsetzen</div>
<svg class="r" style="left:514px;top:937px" width="32" height="30" viewBox="0 0 32 30"><defs><clipPath id="gc3"><rect x="0" y="0" width="32" height="10.5"/><rect x="0" y="19.3" width="32" height="12"/></clipPath></defs><g clip-path="url(#gc3)" fill="none" stroke="#42a5f5" stroke-width="1.4"><circle cx="15" cy="14.85" r="11.2"/><ellipse cx="15" cy="14.85" rx="5" ry="11.2"/><line x1="15" y1="3" x2="15" y2="27"/><line x1="5.9" y1="8.3" x2="24.1" y2="8.3"/><line x1="5.9" y1="21.4" x2="24.1" y2="21.4"/></g><g fill="none" stroke="#5c6bc0" stroke-width="1.55" stroke-linejoin="miter"><polyline points="4.5,12.4 5.6,17.4 6.9,13.8 8.2,17.4 9.3,12.4"/><polyline points="12.7,12.4 13.799999999999999,17.4 15.1,13.8 16.4,17.4 17.5,12.4"/><polyline points="20.8,12.4 21.9,17.4 23.2,13.8 24.5,17.4 25.6,12.4"/></g></svg>
<svg class="r" style="left:556px;top:935px" width="32" height="32" viewBox="0 0 32 32"><path d="M16.2 10 L20.4 5 M20.6 14.2 L24.8 9.8" stroke="#fbc02d" stroke-width="1.7"/><polygon points="11.2,9.7 8.3,12.8 8.3,17.8 11.7,21.1 16.7,21.4 20.5,18.4" fill="#a7b6be"/><polygon points="10.1,8.9 12.4,6.6 23.2,17.2 20.8,19.6" fill="#78909c"/><polygon points="5.9,21.4 8.8,18 11.9,21.3 8.5,24.2" fill="#6e8593"/><path d="M6.8 23.2 Q4 25.6 5 27.4 Q6.5 29 11 27.6 Q15.5 25.8 19 24.3 Q22 23.4 25.8 23.6" stroke="#d3dbdf" stroke-width="1.1" fill="none"/></svg>
<div class="t" style="left:597.50px;top:947px;font-size:12.6px;font-weight:400;color:#1a1a2a;transform:scaleX(0.9118);">Ersatzversorgung</div>
<div class="t" style="left:442.00px;top:989px;font-size:14.0px;font-weight:400;color:#1a1a2a;transform:scaleX(0.9580);">Details</div>
<svg class="r" style="left:1556px;top:992px" width="12" height="8" viewBox="0 0 12 8"><polyline points="1.8,1.7 6,5.9 10.2,1.7" fill="none" stroke="#acacac" stroke-width="1.8"/></svg>
<div class="r" style="left:1513px;top:1040px;width:80px;height:29px;background:#2e4898;border-radius:2px"></div>
<div class="t" style="left:1523.30px;top:1050px;font-size:12.6px;font-weight:700;color:#fff;transform:scaleX(0.9656);">Fortfahren</div>
<svg class="r" style="left:4.5px;top:1101.5px" width="13" height="13" viewBox="0 0 13 13"><circle cx="6.5" cy="6.5" r="6" fill="#f0453a"/><text x="6.5" y="9.6" font-family="Liberation Sans" font-weight="700" font-size="8.5" fill="#fff" text-anchor="middle">4</text></svg>
</body></html>
